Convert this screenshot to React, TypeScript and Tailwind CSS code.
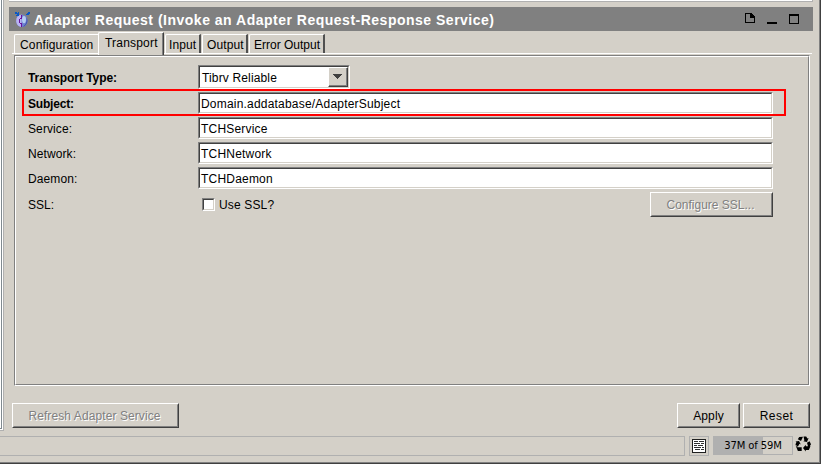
import React from "react";

function Field({ value }: { value: string }) {
  return (
    <div className="h-[22px] w-[575px] border border-t-[#808080] border-l-[#808080] border-r-white border-b-white">
      <div className="flex h-full items-center border border-t-[#404040] border-l-[#404040] border-r-[#d4d0c8] border-b-[#d4d0c8] bg-white pt-[2px] pl-px tracking-[0.2px]">
        {value}
      </div>
    </div>
  );
}

function Button({ label, className, disabled }: { label: string; className: string; disabled?: boolean }) {
  return (
    <div className={`h-[25px] shrink-0 border border-t-white border-l-white border-r-[#404040] border-b-[#404040] ${className}`}>
      <div
        className={`flex h-full items-center justify-center border border-t-[#d4d0c8] border-l-[#d4d0c8] border-r-[#808080] border-b-[#808080] whitespace-nowrap ${
          disabled ? "pr-[2px] text-[#808080] [text-shadow:1px_1px_0_#fff]" : "text-black"
        }`}
      >
        {label}
      </div>
    </div>
  );
}

function Tab({ label, className }: { label: string; className: string }) {
  return (
    <div className={`flex h-[19px] shrink-0 items-center rounded-tl-[2px] border-t border-l border-white pt-[2px] whitespace-nowrap ${className}`}>
      {label}
    </div>
  );
}

function AdapterIcon() {
  return (
    <svg className="shrink-0" width="16" height="17" viewBox="0 0 16 17">
      <ellipse cx="6.9" cy="9.7" rx="5.8" ry="6.3" fill="#6f7fd0" />
      <path d="M6.5 3.6C3 4 1.2 6.4 1.2 9.7S3 15.6 6.5 16z" fill="#b9b4f2" />
      <ellipse cx="9" cy="8.6" rx="2" ry="3.6" fill="#b4cdf2" />
      <path d="M11.5 6.2c1.8 3 1 6.800-2 9l-2 .6c3.600-2 4.600-5.400 4-9.600z" fill="#3f50a8" />
      <path d="M5 7h2v1H5zM4 8h1v4H4zM5 12h2v1H5zM6 4h1v3H6zM6 13h1v3H6z" fill="#6a149c" shapeRendering="crispEdges" />
      <path d="M0 1h2v1h1V1h1v4H1V4h1V3H0zM11 3h1V2h1V1h2v2h-1v1h-3z" fill="#0757c7" shapeRendering="crispEdges" />
    </svg>
  );
}

function RecycleIcon() {
  return (
    <svg width="16" height="16" viewBox="0 0 16 16" fill="black">
      <path d="M4.2 1 8 0.7 6 5 2.8 3.2zM8.5.5h2.7l1.2 2 1.2-.6-1.6 4-3.7-.6 1.1-.8z" />
      <path d="m12 6.8 2.6-1.5 1.4 3-1.6 2.6h-1.2zM8 12l2.8-3.2v1.5h4.7L13.8 14h-3v1.6z" />
      <path d="M.5 5.4 4 5l1.8 3.4-1.3-.6-1.7 3L.4 8.4l1-2.2zM.5 9.2l2 2h4.2V15H2.9z" />
    </svg>
  );
}

export default function App() {
  return (
    <div className="flex h-[464px] w-[821px] flex-col overflow-hidden bg-[#d4d0c8] font-['Liberation_Sans',Arial,sans-serif] text-[12px] leading-[14px] text-black">
      <div className="flex h-[464px] flex-col border-r border-b border-[#404040]">
        <div className="flex h-[463px] flex-col border-r border-b border-[#808080]">
          <div className="flex h-[432px] shrink-0">
            <div className="flex h-[432px] w-[9px] shrink-0">
              <div className="h-[431px] w-[4px] border-r border-b border-[#b0b0b0]">
                <div className="h-[430px] border-r border-b border-white">
                  <div className="h-[429px] border-r border-b border-[#808a90] bg-white" />
                </div>
              </div>
            </div>
            <div className="flex w-[804px] flex-col">
              <div className="h-[2px] shrink-0 border-r border-b border-[#b0b0b0] bg-white" />
              <div className="mt-[5px] flex h-[24px] shrink-0 items-center bg-[#808080] pl-[6px] text-white">
                <AdapterIcon />
                <span className="ml-[3px] whitespace-nowrap pt-px text-[14px] leading-[18px] font-bold tracking-[0.5px]">
                  Adapter Request (Invoke an Adapter Request-Response Service)
                </span>
                <svg className="mr-[14px] mb-[2px] ml-auto" width="54" height="12" viewBox="0 0 54 12" fill="none" shapeRendering="crispEdges">
                  <path d="M0 1h6v1H1v8h8V6h1v5H0z" fill="black" />
                  <path d="M6 1h1v1h1v1h1v1h1v2H5V1z" fill="black" />
                  <path d="M22 10h10v2H22z" fill="black" />
                  <path d="M44 2h10v10H44zM45 4v7h8V4z" fill="black" fillRule="evenodd" />
                </svg>
              </div>

              <div className="flex h-[24px] shrink-0 pt-px">
                <div className="w-[3px] shrink-0" />
                <div className="flex h-[22px] w-[800px] items-end border-b border-white">
                  <div className="w-[2px] shrink-0" />
                  <Tab label="Configuration" className="w-[84px] pl-[5px] tracking-[0.15px]" />
                  <div className="relative -mb-[2px] flex h-[23px] w-[66px] shrink-0 rounded-tl-[2px] border-t border-l border-white border-r-[#404040] border-r bg-[#d4d0c8]">
                    <div className="flex w-full items-center border-r border-[#808080] pl-[6px] pb-[2px] tracking-[0.2px]">Transport</div>
                  </div>
                  <Tab label="Input" className="ml-px w-[36px] border-r-2 border-r-[#505050] pl-[3px] tracking-[0.1px]" />
                  <Tab label="Output" className="ml-px w-[46px] border-r-2 border-r-[#505050] pl-[4px] tracking-[0.1px]" />
                  <Tab label="Error Output" className="ml-px w-[76px] border-r-2 border-r-[#505050] pl-[4px]" />
                </div>
              </div>

              <div className="ml-[5px] h-[331px] w-[796px] shrink-0 border border-t-[#808080] border-l-[#808080] border-r-white border-b-white">
                <div className="flex h-[329px] flex-col border border-t-white border-l-white border-r-[#808080] border-b-[#808080] pt-[8px]">
                  <div className="ml-[12px] flex h-[24px] shrink-0 items-center">
                    <span className="w-[170px] shrink-0 pt-[2px] font-bold tracking-[-0.05px]">Transport Type:</span>
                    <div className="h-[24px] w-[152px] border border-t-[#808080] border-l-[#808080] border-r-white border-b-white">
                      <div className="flex h-full items-center border border-t-[#404040] border-l-[#404040] border-r-[#d4d0c8] border-b-[#d4d0c8] bg-white pl-[2px] tracking-[0.15px]">
                        <span className="pt-[2px]">Tibrv Reliable</span>
                        <div className="ml-auto flex h-[20px] w-[20px] items-center justify-center border border-t-white border-l-white border-r-[#404040] border-b-[#404040] bg-[#d4d0c8]">
                          <div className="flex h-full w-full items-center justify-center border-r border-b border-[#808080]">
                            <svg width="9" height="5" viewBox="0 0 9 5" shapeRendering="crispEdges">
                              <path d="M0 0h9v1H8v1H7v1H6v1H5v1H4V4H3V3H2V2H1V1H0z" fill="#404040" />
                            </svg>
                          </div>
                        </div>
                      </div>
                    </div>
                  </div>
                  <div className="ml-[6px] flex h-[27px] w-[764px] shrink-0 items-center border-2 border-[#ff0000] pl-[4px]">
                    <span className="w-[170px] shrink-0 pt-[2px] font-bold tracking-[-0.2px]">Subject:</span>
                    <Field value="Domain.addatabase/AdapterSubject" />
                  </div>
                  <div className="ml-[12px] mt-px flex flex-col gap-[3px]">
                    {["Service", "Network", "Daemon"].map((name) => (
                      <div key={name} className="flex h-[22px] items-center">
                        <span className="w-[170px] shrink-0 pt-[2px] tracking-[0.1px]">{name}:</span>
                        <Field value={`TCH${name}`} />
                      </div>
                    ))}
                  </div>
                  <div className="ml-[12px] mt-[3px] flex h-[25px] w-[745px] items-center">
                    <span className="w-[174px]">SSL:</span>
                    <div className="h-[13px] w-[13px] border border-t-[#808080] border-l-[#808080] border-r-white border-b-white">
                      <div className="h-full border border-t-[#404040] border-l-[#404040] border-r-[#d4d0c8] border-b-[#d4d0c8] bg-white" />
                    </div>
                    <span className="ml-[4px] mr-auto tracking-[0.15px]">Use SSL?</span>
                    <Button label="Configure SSL..." className="w-[123px]" disabled />
                  </div>
                </div>
              </div>

              <div className="mt-[17px] ml-[3px] flex w-[798px] shrink-0">
                <Button label="Refresh Adapter Service" className="w-[167px] tracking-[0.09px]" disabled />
                <div className="ml-auto flex gap-[3px]">
                  <Button label="Apply" className="w-[63px] tracking-[0.1px]" />
                  <Button label="Reset" className="w-[67px] tracking-[0.45px]" />
                </div>
              </div>
            </div>
          </div>

          <div className="mt-[4px] flex h-[20px] shrink-0">
            <div className="h-[20px] w-[685px] border border-l-0 border-[#b0b0b0]" />
            <div className="ml-[4px] flex h-[20px] w-[20px] items-center justify-center border border-[#b0b0b0]">
              <svg width="14" height="14" viewBox="0 0 14 14" shapeRendering="crispEdges">
                <path d="M0 0h14v14H0z" fill="#202020" />
                <path d="M1 1h12v12H1z" fill="white" />
                <path d="M2 2h4v1H2zM7 2h5v1H7zM2 4h6v1H2zM9 4h3v1H9zM2 6h3v1H2zM6 6h5v1H6zM2 8h7v1H2zM10 8h2v1h-2zM3 10h5v1H3zM9 10h3v1H9z" fill="#303030" />
              </svg>
            </div>
            <div className="ml-[4px] flex h-[19px] w-[80px] items-center justify-center border border-[#b0b0b0] bg-[linear-gradient(to_right,#b0b0b0_49px,transparent_49px)] font-['DejaVu_Sans',sans-serif] text-[10px] tracking-[-0.1px]">
              37M of 59M
            </div>
            <div className="ml-[2px]">
              <RecycleIcon />
            </div>
          </div>
        </div>
      </div>
    </div>
  );
}
